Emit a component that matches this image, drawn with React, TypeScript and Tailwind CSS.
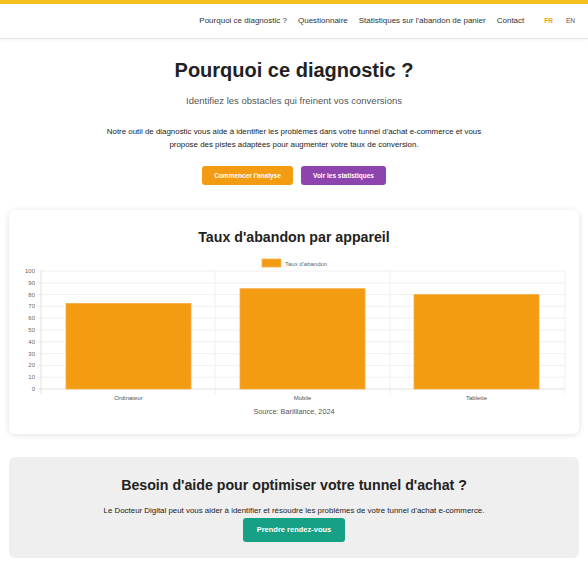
import React from "react";

const data = [
  { label: "Ordinateur", value: 72.5, x: 57 },
  { label: "Mobile", value: 85, x: 231 },
  { label: "Tablette", value: 80, x: 405 },
];

const Chart = () => {
  const y0 = 134;
  const unit = 1.18;
  const ticks = [0, 10, 20, 30, 40, 50, 60, 70, 80, 90, 100];
  return (
    <svg width="570" height="150" viewBox="0 0 570 150" className="block">
      <rect x="253" y="4" width="19" height="8" fill="#f39c12" stroke="#f7b553" strokeWidth="0.8" />
      <text x="276" y="10.5" fontSize="6" fill="#666">
        Taux d'abandon
      </text>
      {ticks.map((t) => {
        const y = y0 - t * unit;
        return (
          <g key={t}>
            <line x1="28.5" x2="556" y1={y} y2={y} stroke={t === 0 ? "#d8d8d8" : "#ececec"} strokeWidth="0.8" />
            <text x="26" y={y + 2} fontSize="6" fill="#666" textAnchor="end">
              {t}
            </text>
          </g>
        );
      })}
      {[32, 206, 381, 556].map((x) => (
        <line key={x} x1={x} x2={x} y1="16" y2="139" stroke={x === 32 ? "#d8d8d8" : "#ececec"} strokeWidth="0.8" />
      ))}
      {data.map((d) => (
        <g key={d.label}>
          <rect
            x={d.x}
            y={y0 - d.value * unit}
            width="125"
            height={d.value * unit}
            fill="#f39c12"
            stroke="#f5ad45"
            strokeWidth="0.8"
          />
          <text x={d.x + 62.5} y="145" fontSize="6" fill="#555" textAnchor="middle">
            {d.label}
          </text>
        </g>
      ))}
    </svg>
  );
};

export default function App() {
  return (
    <div className="min-h-[565px] bg-white text-[#222] font-['Liberation_Sans',Arial,sans-serif]">
      <div className="h-[4px] bg-[#f4c01f]" />
      <nav className="h-[35px] flex items-center justify-end pr-[13px] border-b border-[#e4e4e4] shadow-[0_1px_2px_rgba(0,0,0,0.05)] text-[8px] text-[#333]">
        <div className="flex items-center gap-[11px]">
          <span>Pourquoi ce diagnostic ?</span>
          <span>Questionnaire</span>
          <span>Statistiques sur l'abandon de panier</span>
          <span>Contact</span>
        </div>
        <div className="flex items-center gap-[13px] ml-[20px] text-[6.5px]">
          <span className="text-[#f39c12] font-bold">FR</span>
          <span className="text-[#555]">EN</span>
        </div>
      </nav>

      <section className="flex flex-col items-center text-center">
        <h1 className="mt-[19px] text-[20px] leading-[24px] font-bold text-[#222]">Pourquoi ce diagnostic ?</h1>
        <p className="mt-[13px] text-[9.5px] leading-[12px] text-[#555]">
          Identifiez les obstacles qui freinent vos conversions
        </p>
        <p className="mt-[18px] w-[384px] text-[7.9px] leading-[13px] text-[#222]">
          Notre outil de diagnostic vous aide à identifier les problèmes dans votre tunnel d'achat e-commerce et vous
          propose des pistes adaptées pour augmenter votre taux de conversion.
        </p>
        <div className="mt-[15px] flex gap-[8px]">
          <button className="w-[91px] h-[19px] rounded-[3px] bg-[#f39c12] text-white text-[6.5px] font-bold">
            Commencer l'analyse
          </button>
          <button className="w-[85px] h-[19px] rounded-[3px] bg-[#8e44ad] text-white text-[6.5px] font-bold">
            Voir les statistiques
          </button>
        </div>
      </section>

      <div className="mx-[9px] mt-[25px] bg-white rounded-[6px] shadow-[0_1px_6px_rgba(0,0,0,0.12)] pt-[18px] pb-[17px] flex flex-col items-center">
        <h2 className="text-[14.2px] leading-[18px] font-bold text-[#222]">Taux d'abandon par appareil</h2>
        <div className="mt-[9px] self-stretch">
          <Chart />
        </div>
        <p className="mt-[2px] text-[7.3px] leading-[10px] text-[#555]">Source: Barilliance, 2024</p>
      </div>

      <div className="mx-[9px] mt-[23px] bg-[#efefef] rounded-[6px] pt-[19px] pb-[16px] flex flex-col items-center">
        <h2 className="text-[14.2px] leading-[18px] font-bold text-[#222]">
          Besoin d'aide pour optimiser votre tunnel d'achat ?
        </h2>
        <p className="mt-[12px] text-[7.9px] leading-[10px] text-[#222]">
          Le Docteur Digital peut vous aider à identifier et résoudre les problèmes de votre tunnel d'achat e-commerce.
        </p>
        <button className="mt-[2px] w-[102px] h-[24px] rounded-[3px] bg-[#16a085] text-white text-[7.5px] font-bold">
          Prendre rendez-vous
        </button>
      </div>
      <div className="h-[9px]" />
    </div>
  );
}
